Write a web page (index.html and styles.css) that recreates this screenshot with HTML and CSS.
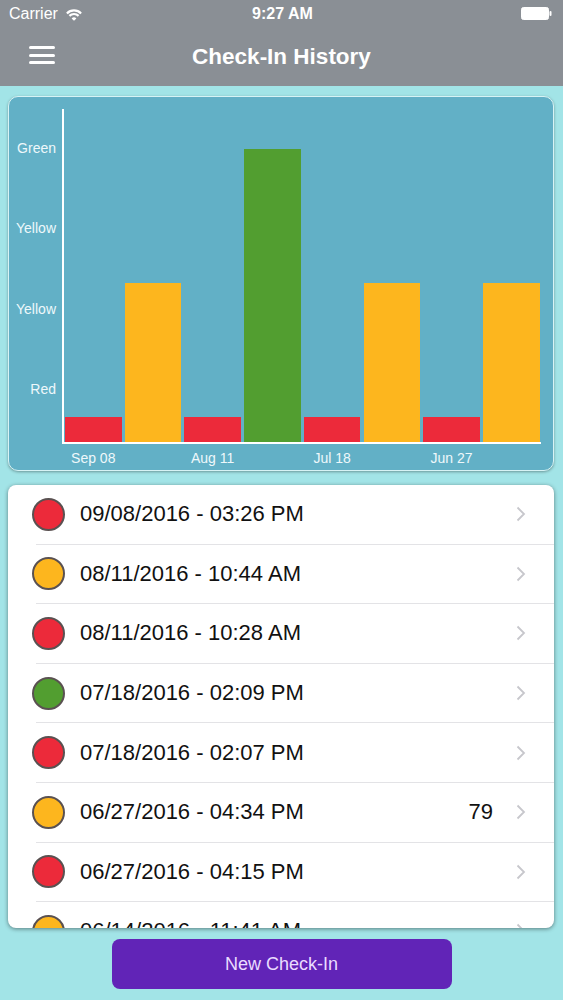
FILE: index.html
```html
<!DOCTYPE html>
<html lang="en">

<head>
    <meta charset="UTF-8">
    <meta name="viewport" content="width=device-width, initial-scale=1.0">
    <title>Check-In History</title>
    <link rel="stylesheet" href="styles.css">
</head>

<body>
    <header class="top-bar">
        <div class="status-bar">
            <div class="carrier">
                Carrier
                <svg class="wifi" width="18" height="13" viewBox="0 0 18 13">
                    <path d="M1.9 5.4 A10 10 0 0 1 16.1 5.4" fill="none" stroke="#fff" stroke-width="2.2" />
                    <path d="M4.4 7.9 A6.5 6.5 0 0 1 13.6 7.9" fill="none" stroke="#fff" stroke-width="2.2" />
                    <path d="M9 12.8 L6.6 10.4 A3.4 3.4 0 0 1 11.4 10.4 Z" fill="#fff" />
                </svg>
            </div>
            <div class="clock">9:27 AM</div>
            <div class="battery">
                <svg width="32" height="14" viewBox="0 0 32 14">
                    <rect x="0.5" y="0.5" width="27" height="12" rx="2" fill="#fff" stroke="#fff" />
                    <rect x="28.5" y="4" width="2" height="5" rx="1" fill="#fff" />
                </svg>
            </div>
        </div>
        <nav class="nav-bar">
            <span class="menu-btn">
                <i></i><i></i><i></i>
            </span>
            <h1>Check-In History</h1>
            <span></span>
        </nav>
    </header>

    <main class="content">
        <section class="chart-card">
            <div class="y-labels">
                <span>Green</span>
                <span>Yellow</span>
                <span>Yellow</span>
                <span>Red</span>
            </div>
            <div class="plot">
                <div class="bar red"></div>
                <div class="bar yellow"></div>
                <div class="bar red"></div>
                <div class="bar green"></div>
                <div class="bar red"></div>
                <div class="bar yellow"></div>
                <div class="bar red"></div>
                <div class="bar yellow"></div>
            </div>
            <div></div>
            <div class="x-labels">
                <span>Sep 08</span><span></span>
                <span>Aug 11</span><span></span>
                <span>Jul 18</span><span></span>
                <span>Jun 27</span><span></span>
            </div>
        </section>

        <ul class="history-list">
            <li><span class="dot red"></span><span class="when">09/08/2016 - 03:26 PM</span><span class="score"></span><svg class="chevron" viewBox="0 0 10 16"><polyline points="1.5,1.5 8,8 1.5,14.5" /></svg></li>
            <li><span class="dot yellow"></span><span class="when">08/11/2016 - 10:44 AM</span><span class="score"></span><svg class="chevron" viewBox="0 0 10 16"><polyline points="1.5,1.5 8,8 1.5,14.5" /></svg></li>
            <li><span class="dot red"></span><span class="when">08/11/2016 - 10:28 AM</span><span class="score"></span><svg class="chevron" viewBox="0 0 10 16"><polyline points="1.5,1.5 8,8 1.5,14.5" /></svg></li>
            <li><span class="dot green"></span><span class="when">07/18/2016 - 02:09 PM</span><span class="score"></span><svg class="chevron" viewBox="0 0 10 16"><polyline points="1.5,1.5 8,8 1.5,14.5" /></svg></li>
            <li><span class="dot red"></span><span class="when">07/18/2016 - 02:07 PM</span><span class="score"></span><svg class="chevron" viewBox="0 0 10 16"><polyline points="1.5,1.5 8,8 1.5,14.5" /></svg></li>
            <li><span class="dot yellow"></span><span class="when">06/27/2016 - 04:34 PM</span><span class="score">79</span><svg class="chevron" viewBox="0 0 10 16"><polyline points="1.5,1.5 8,8 1.5,14.5" /></svg></li>
            <li><span class="dot red"></span><span class="when">06/27/2016 - 04:15 PM</span><span class="score"></span><svg class="chevron" viewBox="0 0 10 16"><polyline points="1.5,1.5 8,8 1.5,14.5" /></svg></li>
            <li><span class="dot yellow"></span><span class="when">06/14/2016 - 11:41 AM</span><span class="score"></span><svg class="chevron" viewBox="0 0 10 16"><polyline points="1.5,1.5 8,8 1.5,14.5" /></svg></li>
        </ul>

        <button class="checkin-btn">New Check-In</button>
    </main>
</body>

</html>
```

FILE: styles.css
```css
body {
    margin: 0;
    background: #a2e4e7;
    font-family: "Liberation Sans", Arial, sans-serif;
    width: 563px;
    height: 1000px;
    overflow: hidden;
}

.top-bar {
    background: #8a8f95;
    color: #fff;
    height: 86px;
}

.status-bar {
    height: 28px;
    display: grid;
    grid-template-columns: 1fr auto 1fr;
    align-items: center;
    font-size: 16px;
    padding: 0 10px 0 9px;
}

.carrier {
    display: flex;
    align-items: center;
    gap: 7px;
}

.clock {
    font-weight: bold;
    padding-left: 3px;
}

.battery {
    display: flex;
    justify-content: flex-end;
}

.nav-bar {
    height: 58px;
    display: grid;
    grid-template-columns: 1fr auto 1fr;
    align-items: center;
    padding: 0 29px;
}

.nav-bar h1 {
    margin: 0;
    font-size: 22.5px;
    font-weight: bold;
}

.menu-btn {
    display: flex;
    flex-direction: column;
    gap: 4.5px;
    width: 26px;
    margin-top: -4px;
}

.menu-btn i {
    display: block;
    height: 3px;
    background: #fff;
    border-radius: 2px;
}

.content {
    padding: 10px 9px 0 8px;
    display: flex;
    flex-direction: column;
}

/* chart */

.chart-card {
    height: 375px;
    box-sizing: border-box;
    background: #62b0c6;
    border: 1px solid #d7f3f5;
    border-radius: 10px;
    box-shadow: 0 1px 3px rgba(0, 0, 0, 0.35);
    padding: 12px 12px 0 0;
    display: grid;
    grid-template-columns: 53px 1fr;
    grid-template-rows: 335px 1fr;
}

.y-labels {
    display: flex;
    flex-direction: column;
    align-items: flex-end;
    gap: 64.6px;
    padding: 30.7px 6px 0 0;
    color: #eef8fb;
    font-size: 14px;
    line-height: 16px;
}

.plot {
    border-left: 2px solid #fff;
    border-bottom: 2px solid #fff;
    display: grid;
    grid-template-columns: repeat(8, 1fr);
    column-gap: 3.2px;
    align-items: end;
    padding: 0 1.5px 0 1px;
}

.x-labels {
    display: grid;
    grid-template-columns: repeat(8, 1fr);
    column-gap: 3.2px;
    padding: 6px 1.5px 0 3px;
    color: #eef8fb;
    font-size: 14px;
    line-height: 16px;
}

.x-labels span {
    text-align: center;
    white-space: nowrap;
}

.bar.red {
    background: #ec2a3a;
    height: 25px;
}

.bar.yellow {
    background: #fdb61e;
    height: 159px;
}

.bar.green {
    background: #529e30;
    height: 293px;
}

/* list */

.history-list {
    list-style: none;
    margin: 14px 0 0;
    padding: 0;
    height: 443px;
    background: #fff;
    border-radius: 8px;
    box-shadow: 0 1px 4px rgba(0, 0, 0, 0.45);
    overflow: hidden;
}

.history-list li {
    height: 59.6px;
    box-sizing: border-box;
    margin-left: 28px;
    border-bottom: 1px solid #e3e3e6;
    display: flex;
    align-items: center;
    padding-right: 28px;
}

.dot {
    width: 29px;
    height: 29px;
    border: 2.2px solid #5a5151;
    border-radius: 50%;
    margin-left: -4px;
    margin-right: 15px;
    flex-shrink: 0;
}

.dot.red {
    background: #ec2a3a;
}

.dot.yellow {
    background: #fdb61e;
}

.dot.green {
    background: #529e30;
}

.when {
    flex: 1;
    font-size: 22px;
    color: #111;
    white-space: nowrap;
}

.score {
    font-size: 22px;
    color: #111;
}

.chevron {
    width: 10px;
    height: 16px;
    margin-left: 23px;
    fill: none;
    stroke: #c7c7cc;
    stroke-width: 1.8;
}

.checkin-btn {
    align-self: center;
    margin: 11px 0 0 1px;
    width: 340px;
    height: 50px;
    border: none;
    border-radius: 8px;
    background: #6124b7;
    color: #eadcff;
    font-family: inherit;
    font-size: 18px;
}
```
